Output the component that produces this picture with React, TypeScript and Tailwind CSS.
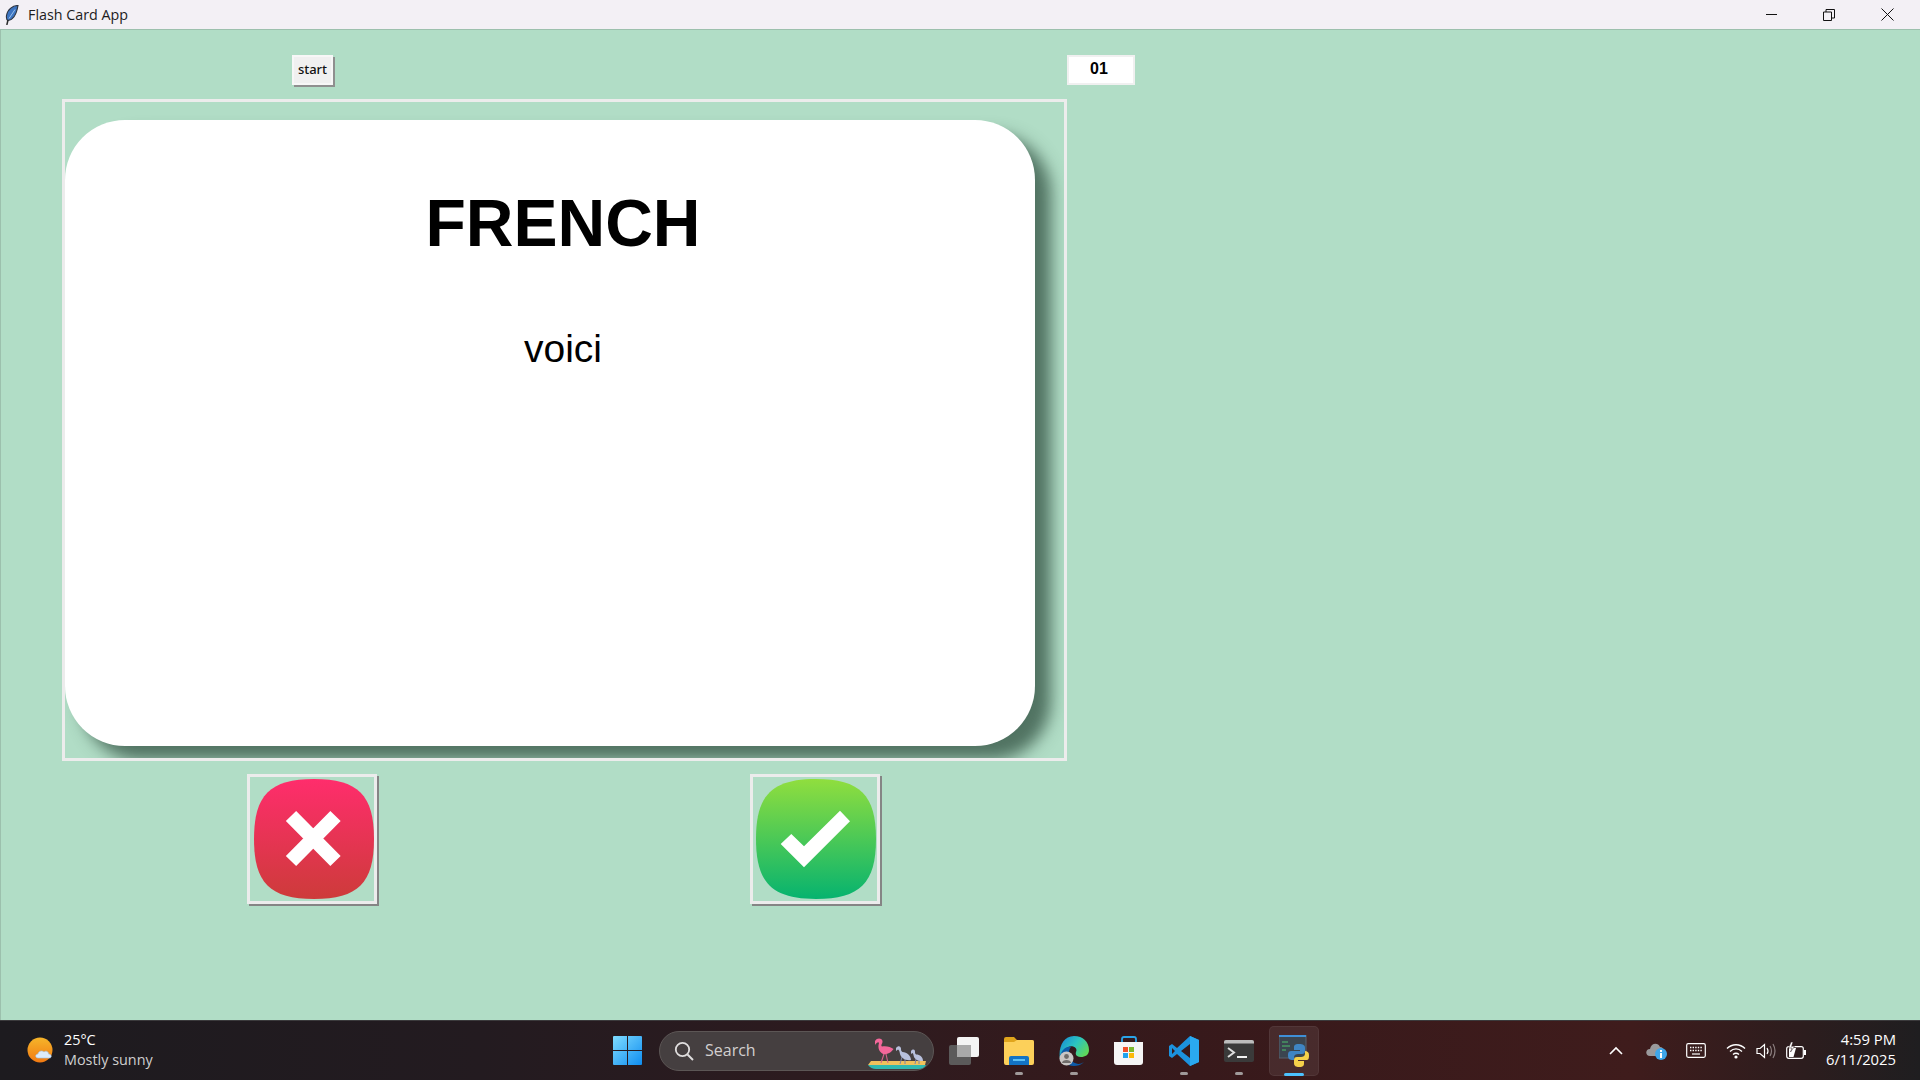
const uiFont = { fontFamily: '"Open Sans", "Noto Sans", sans-serif' };

function Feather() {
  return (
    <svg width="14" height="20" viewBox="0 0 14 20">
      <path d="M13 0.5 C8 0.5 2.5 4 1.5 10.5 C1.2 13 1.6 15 3 15.5 C7.5 15 11.5 9.5 13 0.5Z" fill="#3c74c0" stroke="#2b3340" strokeWidth="1.1" />
      <path d="M3 15 L1.8 20" stroke="#2b2b2b" strokeWidth="1.5" />
      <path d="M10 4.5 L4 13.5" stroke="#9cc4ee" strokeWidth="1" />
    </svg>
  );
}

function DecisionButton({ gradId, from, to, shift, children }: { gradId: string; from: string; to: string; shift: string; children: React.ReactNode }) {
  return (
    <button className={`w-[130px] h-[130px] border-[3px] border-[#ececec] shadow-[2px_2px_0_0_#858585] flex items-center justify-center ${shift}`}>
      <svg width="120" height="120" viewBox="0 0 120 120" className="shrink-0">
        <defs>
          <linearGradient id={gradId} x1="0" y1="0" x2="0" y2="1">
            <stop offset="0" stopColor={from} />
            <stop offset="1" stopColor={to} />
          </linearGradient>
        </defs>
        <path d="M60 0 C104 0 120 16 120 60 C120 104 104 120 60 120 C16 120 0 104 0 60 C0 16 16 0 60 0Z" fill={`url(#${gradId})`} />
        {children}
      </svg>
    </button>
  );
}

function Weather() {
  return (
    <svg width="28" height="28" viewBox="0 0 28 28">
      <defs>
        <linearGradient id="sun" x1="0" y1="0" x2="0" y2="1">
          <stop offset="0" stopColor="#f5b52a" />
          <stop offset="1" stopColor="#f27a12" />
        </linearGradient>
      </defs>
      <circle cx="13" cy="13" r="12.5" fill="url(#sun)" />
      <path d="M11 21 C8 21 8 17 11 17 C11.5 14 15 13 17 15 C19 13 22 15 21.5 17 C25 17 25 21 22.5 21Z" fill="#dcebfa" stroke="#9fc3e8" strokeWidth="0.6" />
    </svg>
  );
}

function WindowsLogo() {
  return (
    <svg width="29" height="29" viewBox="0 0 29 29">
      <defs>
        <linearGradient id="win" x1="0" y1="0" x2="1" y2="1">
          <stop offset="0" stopColor="#7fdcff" />
          <stop offset="1" stopColor="#0f8df0" />
        </linearGradient>
      </defs>
      <path d="M1 0 H14 V14 H0 V1 Q0 0 1 0Z M15 0 H28 Q29 0 29 1 V14 H15Z M0 15 H14 V29 H1 Q0 29 0 28Z M15 15 H29 V28 Q29 29 28 29 H15Z" fill="url(#win)" />
    </svg>
  );
}

function Flamingos() {
  return (
    <svg width="60" height="32" viewBox="0 0 60 32">
      <path d="M0 27 H58 Q56 31 50 31 H8 Q3 31 0 27Z" fill="#2fb9b0" />
      <path d="M3 23 H58 L57 27 H0Z" fill="#efc15c" />
      <path d="M13 25 L16 16 M20 25 L18 16" stroke="#d9628c" strokeWidth="1.1" fill="none" />
      <path d="M7 3 C9 -1 15 0 14.5 4 C14 6.5 12.5 7.5 14 8.5 C18 7.5 23 9 25.5 11 C23 15 17 18 13.5 15 C10 12 10 8 11 5 C10.5 3.5 9 4 7 7Z" fill="#f4679a" />
      <path d="M32 26 L34 19 M37 26 L37 19" stroke="#7d86a8" strokeWidth="1" fill="none" />
      <path d="M28 10 C30 7 33 8 33 10.5 C33 12 33 13 34.5 14 C39 14 43 18 43 22 C38 23 33 20 32 16 C31.5 13 31 12 30 11.5 L28 13Z" fill="#b8c0dc" />
      <path d="M47 26 L48 21 M51 26 L51 21" stroke="#7d86a8" strokeWidth="1" fill="none" />
      <path d="M43 13 C45 10.5 47 11.5 47 13.5 C47 15 47 15.5 48 16.5 C52 16.5 55 19 55 23 C51 23.5 47 21.5 46 19 C45.5 17 45.5 16 44.5 15 L43 16Z" fill="#b8c0dc" />
    </svg>
  );
}

function TaskView() {
  return (
    <svg width="30" height="28" viewBox="0 0 30 28">
      <rect x="0" y="8" width="22" height="20" rx="2" fill="#5b5a5a" />
      <rect x="8" y="0" width="22" height="20" rx="2" fill="#f4f4f4" />
      <rect x="8" y="8" width="14" height="12" fill="#a9a9a9" />
    </svg>
  );
}

function Folder() {
  return (
    <svg width="30" height="28" viewBox="0 0 30 28">
      <path d="M0 2 Q0 0 2 0 H10 L13 3 H28 Q30 3 30 5 V10 H0Z" fill="#e0a51c" />
      <path d="M0 5 H10 L13 3 H28 Q30 3 30 5 V26 Q30 28 28 28 H2 Q0 28 0 26Z" fill="#fcd05a" />
      <path d="M5 28 V21 Q5 19 7 19 H23 Q25 19 25 21 V28Z" fill="#1273c4" />
      <rect x="9" y="22" width="12" height="2" fill="#5cc0f4" />
    </svg>
  );
}

function Edge() {
  return (
    <svg width="30" height="30" viewBox="0 0 30 30">
      <defs>
        <linearGradient id="edge" x1="0" y1="0" x2="1" y2="0.6">
          <stop offset="0" stopColor="#1583d8" />
          <stop offset="0.55" stopColor="#2bc5c0" />
          <stop offset="1" stopColor="#5fd85a" />
        </linearGradient>
      </defs>
      <path d="M15 0 C24 0 30 6 30 14 C30 19 26 21 22 21 C18 21 16 19 17 16 C19 12 14 9 9 11 C5 13 2 18 1 23 C-1 12 4 0 15 0Z" fill="url(#edge)" />
      <path d="M1 20 C3 13 8 10 12 11 C9 14 9 22 14 26 C17 28 21 29 25 26 C22 29 18 30 15 30 C8 30 3 26 1 20Z" fill="#0c5aa8" />
      <circle cx="7.5" cy="22.5" r="7" fill="#c9c6c4" />
      <circle cx="7.5" cy="20.5" r="2.4" fill="#6f6c6a" />
      <path d="M3 27 C3 23 12 23 12 27 Z" fill="#6f6c6a" />
    </svg>
  );
}

function Store() {
  return (
    <svg width="30" height="30" viewBox="0 0 30 30">
      <path d="M8 7 V3 Q8 1 10 1 H20 Q22 1 22 3 V7" fill="none" stroke="#2aa4e8" strokeWidth="1.8" />
      <path d="M0 6 H29 V26 Q29 29 26 29 H3 Q0 29 0 26Z" fill="#f5f5f5" />
      <rect x="9" y="11" width="5" height="5" fill="#f0502a" />
      <rect x="15" y="11" width="5" height="5" fill="#7cb82e" />
      <rect x="9" y="17" width="5" height="5" fill="#1fa2ee" />
      <rect x="15" y="17" width="5" height="5" fill="#fbb90a" />
    </svg>
  );
}

function VsCode() {
  return (
    <svg width="30" height="30" viewBox="0 0 30 30">
      <path d="M21 0 L30 4 V26 L21 30 L8 18 L3 22 L0 20 V10 L3 8 L8 12Z M21 8 L12 15 L21 22Z M3 12 V18 L6 15Z" fill="#1c92de" fillRule="evenodd" />
      <path d="M21 0 L30 4 V26 L21 30Z" fill="#2aa9f0" />
    </svg>
  );
}

function Terminal() {
  return (
    <svg width="30" height="22" viewBox="0 0 30 22">
      <rect width="30" height="22" rx="2" fill="#3a3a3a" />
      <path d="M0 2 Q0 0 2 0 H28 Q30 0 30 2 V3.5 H0Z" fill="#bdbdbd" />
      <path d="M4 8 L10 12.5 L4 17" fill="none" stroke="#dedede" strokeWidth="2" />
      <rect x="13" y="16" width="10" height="2" fill="#f1f1f1" />
    </svg>
  );
}

function PythonIdle() {
  return (
    <svg width="30" height="32" viewBox="0 0 30 32">
      <rect x="0" y="0" width="27" height="23" fill="#3b4550" stroke="#59636e" />
      <rect x="0" y="0" width="27" height="2" fill="#3f90d8" />
      <path d="M3 7 H9 M3 11 H11 M3 15 H7" stroke="#4fbf6a" strokeWidth="1" />
      <path d="M20 9 C15 9 15 11 15 13 V15 H21 V16 H12 C9 16 9 19 9 21 C9 24 11 25 13 25 H15 V22 C15 20 17 19 19 19 H23 C25 19 26 18 26 16 V13 C26 10 24 9 20 9Z" fill="#3f85c4" />
      <path d="M20 32 C25 32 25 30 25 28 V26 H19 V25 H28 C30 25 30 22 30 20 C30 17 28 16 26 16 V19 C26 21 24 22 22 22 H18 C16 22 15 23 15 25 V28 C15 31 17 32 20 32Z" fill="#f5d14a" />
    </svg>
  );
}

function Cell({ children, dot, active }: { children: React.ReactNode; dot?: boolean; active?: boolean }) {
  return (
    <div className="w-[55px] h-[50px] flex items-center justify-center relative">
      {active && <div className="absolute left-[3px] w-[50px] h-[50px] rounded-[5px] bg-[#ffffff14] border border-[#ffffff0f]" />}
      <div className="relative flex items-center justify-center">{children}</div>
      {dot && <div className="absolute bottom-[1px] left-[24px] w-[8px] h-[3px] rounded-full bg-[#a09a9a]" />}
      {active && <div className="absolute bottom-[0px] left-[18px] w-[20px] h-[3px] rounded-full bg-[#4cc2ff]" />}
    </div>
  );
}

function Tray() {
  return (
    <div className="flex items-center">
      <svg width="14" height="9" viewBox="0 0 14 9" className="mr-[23px]">
        <path d="M1 8 L7 2 L13 8" fill="none" stroke="#fff" strokeWidth="1.6" />
      </svg>
      <svg width="22" height="20" viewBox="0 0 22 20" className="mr-[18px]">
        <path d="M4 15 C-1 15 -1 8 4 8 C5 2 12 1 14 6 C17 6 18 9 17 11 L10 15Z" fill="#9a9a9c" />
        <circle cx="15" cy="13" r="6" fill="#3ea6ea" />
        <rect x="14" y="12" width="2" height="5" fill="#fff" />
        <rect x="14" y="9" width="2" height="2" fill="#fff" />
      </svg>
      <svg width="20" height="15" viewBox="0 0 20 15" className="mr-[20px]">
        <rect x="0.7" y="0.7" width="18.6" height="13.6" rx="1.5" fill="none" stroke="#fff" strokeWidth="1.2" />
        <path d="M4 4.5 H16 M4 7.5 H16" stroke="#fff" strokeWidth="1.3" strokeDasharray="1.4 1.2" />
        <path d="M6 11 H14" stroke="#fff" strokeWidth="1.2" />
      </svg>
      <svg width="20" height="16" viewBox="0 0 20 16" className="mr-[10px]">
        <path d="M1 5.5 C6 0.5 14 0.5 19 5.5 M4 8.5 C7.5 5 12.5 5 16 8.5 M7 11.5 C9 9.8 11 9.8 13 11.5" fill="none" stroke="#fff" strokeWidth="1.4" />
        <circle cx="10" cy="14" r="1.6" fill="#fff" />
      </svg>
      <svg width="20" height="16" viewBox="0 0 20 16" className="mr-[10px]">
        <path d="M1 5.5 H4 L8.5 1.5 V14.5 L4 10.5 H1Z" fill="none" stroke="#fff" strokeWidth="1.2" />
        <path d="M11 5 Q13 8 11 11" fill="none" stroke="#fff" strokeWidth="1.2" />
        <path d="M14 3 Q17 8 14 13 M17 1 Q21 8 17 15" fill="none" stroke="#8b7f7f" strokeWidth="1.2" />
      </svg>
      <svg width="20" height="18" viewBox="0 0 20 18">
        <rect x="0.7" y="4.7" width="16.6" height="11.6" rx="2" fill="none" stroke="#fff" strokeWidth="1.2" />
        <rect x="18" y="8" width="2" height="5" fill="#fff" />
        <path d="M3 6 H10 L7.5 15 H3Z" fill="#fff" />
        <path d="M5 0 L2.5 6 H6 L4.5 10 L8.5 4.5 H5.5 L7 0Z" fill="#fff" stroke="#2c1a1c" strokeWidth="0.5" />
      </svg>
    </div>
  );
}

export default function App() {
  return (
    <div className="w-[1920px] h-[1080px] flex flex-col overflow-hidden bg-[#b1ddc6]" style={uiFont}>
      {/* TITLE BAR */}
      <div className="h-[30px] shrink-0 flex items-center bg-[#f3f0f5] border-b border-[#9cc0ad]">
        <div className="ml-[5px] w-[23px] flex"><Feather /></div>
        <span className="text-[14.3px] text-[#1c1c1c]">Flash Card App</span>
        <div className="ml-auto mr-[4px] flex items-center">
          <div className="w-[58px] flex justify-center">
            <div className="w-[11px] h-[1px] bg-[#111]" />
          </div>
          <div className="w-[58px] flex justify-center">
            <svg width="12" height="12" viewBox="0 0 12 12">
              <path d="M0.5 3 H8.5 V11.5 H0.5Z M3 3 V0.5 H11.5 V9 H8.5" fill="none" stroke="#111" strokeWidth="1" />
            </svg>
          </div>
          <div className="w-[58px] flex justify-center">
            <svg width="13" height="13" viewBox="0 0 13 13">
              <path d="M0.5 0.5 L12.5 12.5 M12.5 0.5 L0.5 12.5" stroke="#111" strokeWidth="1" />
            </svg>
          </div>
        </div>
      </div>

      {/* APP */}
      <div className="flex-1 pt-[24px] border-l border-[#9cc0ad]">
        <div className="flex items-center h-[32px] pl-[291px]">
          <button className="w-[41px] h-[30px] bg-[#f0f0f0] border-2 border-[#f7f7f7] shadow-[2px_2px_0_0_#8f8f8f] text-[13px] font-medium text-[#111]" style={{ fontFamily: '"Noto Sans", sans-serif' }}>
            start
          </button>
          <div className="ml-[734px] w-[68px] h-[30px] bg-white border-2 border-[#f0f0f0] flex items-center justify-center text-[16px] font-bold text-black pr-[4px] pb-[2px]" style={{ fontFamily: '"Liberation Sans", sans-serif' }}>
            01
          </div>
        </div>

        <div className="mt-[13px] ml-[61px] w-[1005px] h-[662px] border-[3px] border-[#ececec] overflow-hidden">
          <div className="mt-[18px] w-[970px] h-[626px] rounded-[60px] bg-white shadow-[16px_14px_16px_0_rgba(40,70,55,0.7)] pl-[26px] pt-[71px] text-center text-black" style={{ fontFamily: '"Liberation Sans", Arial, sans-serif' }}>
            <div className="text-[66px] leading-[64px] font-bold">FRENCH</div>
            <div className="mt-[75px] text-[39px] leading-[38px]">voici</div>
          </div>
        </div>

        <div className="flex mt-[13px] ml-[246px]">
          <DecisionButton gradId="red" from="#ff2d6c" to="#cd3b3a" shift="pl-[4px]">
            <path d="M37 37 L81.5 82 M81.5 37 L37 82" stroke="#fff" strokeWidth="14.5" />
          </DecisionButton>
          <div className="ml-[373px]">
            <DecisionButton gradId="green" from="#90de3e" to="#06b36f" shift="pl-[2px]">
              <polygon points="24.7,65 35.3,55 48,67.3 84,31.7 94,42.3 48,88.3" fill="#fff" />
            </DecisionButton>
          </div>
        </div>
      </div>

      {/* TASKBAR */}
      <div className="h-[60px] shrink-0 flex items-center pl-[27px] pr-[24px] border-t border-[#3b3a3c] bg-[linear-gradient(90deg,#1d1b1f_0%,#231b20_25%,#2e1b1f_45%,#37191b_62%,#3f1c1c_85%,#2c1d1e_94%,#1f1e20_100%)]">
        <div className="w-[586px] flex items-center">
          <Weather />
          <div className="ml-[9px] mb-[2px] text-[14.4px] leading-[20px]">
            <div className="text-white">25°C</div>
            <div className="text-[#cfcfcf]">Mostly sunny</div>
          </div>
        </div>
        <WindowsLogo />
        <div className="ml-[17px] w-[275px] h-[40px] rounded-full bg-[#453f40] border border-[#5c5655] flex items-center pl-[14px] relative">
          <svg width="20" height="20" viewBox="0 0 20 20">
            <circle cx="8.5" cy="8.5" r="6.7" fill="none" stroke="#e0dede" strokeWidth="1.8" />
            <path d="M13.5 13.5 L19 19" stroke="#e0dede" strokeWidth="2" />
          </svg>
          <span className="ml-[11px] mb-[1px] text-[16px] text-[#d2cfcf]">Search</span>
          <div className="absolute right-[5px] top-[6px]"><Flamingos /></div>
        </div>
        <div className="ml-[2px] flex">
          <Cell><TaskView /></Cell>
          <Cell dot><Folder /></Cell>
          <Cell dot><Edge /></Cell>
          <Cell><Store /></Cell>
          <Cell dot><VsCode /></Cell>
          <Cell dot><Terminal /></Cell>
          <Cell active><PythonIdle /></Cell>
        </div>
        <div className="ml-auto flex items-center">
          <Tray />
          <div className="ml-[10px] mb-[3px] w-[80px] text-right text-[14.8px] leading-[20px] text-white">
            <div>4:59 PM</div>
            <div>6/11/2025</div>
          </div>
        </div>
      </div>
    </div>
  );
}
